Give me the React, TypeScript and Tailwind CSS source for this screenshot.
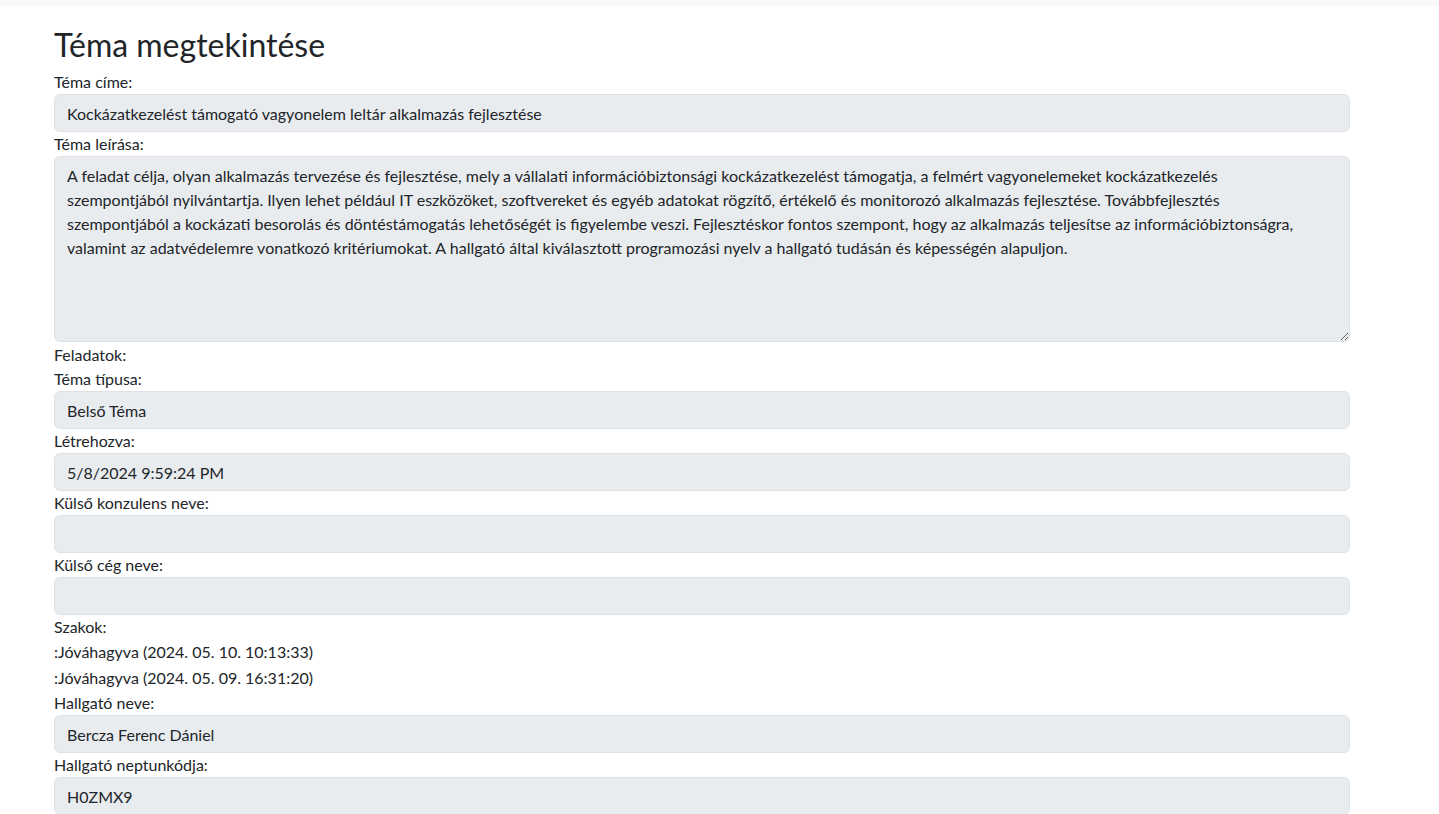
const font = { fontFamily: '"Lato", "Open Sans", sans-serif' }

const description =
    'A feladat célja, olyan alkalmazás tervezése és fejlesztése, mely a vállalati információbiztonsági kockázatkezelést támogatja, a felmért vagyonelemeket kockázatkezelés\n' +
    'szempontjából nyilvántartja. Ilyen lehet például IT eszközöket, szoftvereket és egyéb adatokat rögzítő, értékelő és monitorozó alkalmazás fejlesztése. Továbbfejlesztés\n' +
    'szempontjából a kockázati besorolás és döntéstámogatás lehetőségét is figyelembe veszi. Fejlesztéskor fontos szempont, hogy az alkalmazás teljesítse az információbiztonságra,\n' +
    'valamint az adatvédelemre vonatkozó kritériumokat. A hallgató által kiválasztott programozási nyelv a hallgató tudásán és képességén alapuljon.'

type FieldProps = {
    label: string
    value: string
}

function Field({ label, value }: FieldProps) {
    return (
        <div>
            <label className="block h-6 leading-6">{label}</label>
            <input
                readOnly
                value={value}
                className="block w-full h-[38px] px-3 bg-[#e9ecef] border border-[#dee2e6] rounded-md text-[#212529] outline-none"
                style={font}
            />
        </div>
    )
}

const approvals = ['2024. 05. 10. 10:13:33', '2024. 05. 09. 16:31:20']

export default function App() {
    return (
        <div className="min-h-screen bg-white text-[#212529] text-base" style={font}>
            <div className="h-[6px] bg-[#f8f9fa]"></div>
            <div className="ml-[54px] w-[1296px]">
                <h2 className="text-[32px] leading-[38px] mt-[20px] mb-[6px] font-normal">Téma megtekintése</h2>
                <Field label="Téma címe:" value="Kockázatkezelést támogató vagyonelem leltár alkalmazás fejlesztése" />
                <div>
                    <label className="block h-6 leading-6">Téma leírása:</label>
                    <textarea
                        readOnly
                        value={description}
                        className="block w-full h-[186px] px-3 py-[7px] leading-6 bg-[#e9ecef] border border-[#dee2e6] rounded-md text-[#212529] outline-none whitespace-pre-wrap"
                        style={font}
                    />
                </div>
                <div className="h-6 leading-6 mt-[1px]">Feladatok:</div>
                <Field label="Téma típusa:" value="Belső Téma" />
                <Field label="Létrehozva:" value="5/8/2024 9:59:24 PM" />
                <Field label="Külső konzulens neve:" value="" />
                <Field label="Külső cég neve:" value="" />
                <div className="h-6 leading-6">Szakok:</div>
                {approvals.map((date) => (
                    <div key={date} className="h-[26px] leading-[26px]">
                        :Jóváhagyva ({date})
                    </div>
                ))}
                <Field label="Hallgató neve:" value="Bercza Ferenc Dániel" />
                <Field label="Hallgató neptunkódja:" value="H0ZMX9" />
            </div>
        </div>
    )
}
